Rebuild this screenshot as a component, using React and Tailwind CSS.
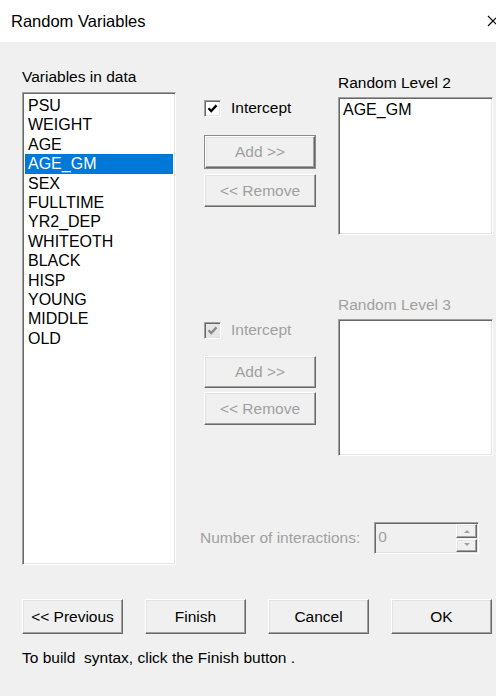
import React from 'react';

const variables = [
    'PSU', 'WEIGHT', 'AGE', 'AGE_GM', 'SEX', 'FULLTIME', 'YR2_DEP',
    'WHITEOTH', 'BLACK', 'HISP', 'YOUNG', 'MIDDLE', 'OLD',
];

const font = { fontFamily: '"Liberation Sans", Arial, sans-serif' };

// classic 3D frames
const sunken =
    'border border-t-[#a0a0a0] border-l-[#a0a0a0] border-b-white border-r-white shadow-[inset_1px_1px_0_#696969,inset_-1px_-1px_0_#e3e3e3]';
const raised =
    'border border-t-white border-l-white border-b-[#696969] border-r-[#696969] shadow-[inset_-1px_-1px_0_#a0a0a0,inset_1px_1px_0_#e3e3e3]';

function Button({ children, disabled, framed, className = '' }) {
    return (
        <div className={`${framed ? 'border border-[#8a8a8a]' : ''} ${className}`}>
            <div
                className={`h-full w-full flex items-center justify-center bg-[#f0f0f0] text-[15.5px] ${raised} ${disabled ? 'text-[#a0a0a0]' : 'text-black'}`}
            >
                {children}
            </div>
        </div>
    );
}

function Checkbox({ label, disabled }) {
    return (
        <div className="flex items-center h-[18px]">
            <div className={`w-[17px] h-[17px] flex items-center justify-center ${sunken} ${disabled ? 'bg-[#e6e6e6]' : 'bg-white'}`}>
                <svg width="11" height="11" viewBox="0 0 11 11">
                    <path d="M1.5 5.2 L4.2 8 L9.5 2.4" fill="none" stroke={disabled ? '#8a8a8a' : '#000'} strokeWidth="2.3" />
                </svg>
            </div>
            <span className={`ml-[10px] text-[15.5px] ${disabled ? 'text-[#a0a0a0]' : 'text-black'}`}>{label}</span>
        </div>
    );
}

function LevelGroup({ title, items, disabled, boxH, addClass, removeClass }) {
    return (
        <div className="flex gap-[22px]">
            {/* Intercept + Add/Remove */}
            <div className="w-[112px] flex flex-col pt-[25px]">
                <Checkbox label="Intercept" disabled={disabled} />
                <Button disabled framed={!disabled} className={addClass}>Add &gt;&gt;</Button>
                <Button disabled className={removeClass}>&lt;&lt; Remove</Button>
            </div>
            {/* Level box */}
            <div className="w-[155px] flex flex-col">
                <div className={`h-[18px] leading-[18px] text-[15.5px] ${disabled ? 'text-[#a0a0a0]' : 'text-black'}`}>{title}</div>
                <div className={`mt-[5px] bg-white ${sunken} pl-[4px] pt-[2px]`} style={{ height: boxH }}>
                    {items.map((it) => (
                        <div key={it} className="text-[16px] leading-[19.4px]">{it}</div>
                    ))}
                </div>
            </div>
        </div>
    );
}

export default function App() {
    return (
        <div className="w-[496px] h-[696px] bg-[#f0f0f0] flex flex-col overflow-hidden" style={font}>
            {/* Title bar */}
            <div className="h-[42px] bg-white flex items-center justify-between pl-[11px] shrink-0">
                <span className="text-[16.5px] text-black">Random Variables</span>
                <svg width="12" height="12" viewBox="0 0 12 12" className="mr-[-3px]">
                    <path d="M1 1 L11 11 M11 1 L1 11" stroke="#000" strokeWidth="1.2" />
                </svg>
            </div>

            <div className="flex pl-[22px]">
                {/* Variables list */}
                <div className="w-[154px] flex flex-col pt-[26px]">
                    <div className="h-[18px] leading-[18px] text-[15.5px]">Variables in data</div>
                    <div className={`mt-[6px] h-[473px] bg-white ${sunken} p-[2px] pt-[3px]`}>
                        {variables.map((v) => (
                            <div
                                key={v}
                                className={`pl-[3px] text-[16px] leading-[19.4px] ${v === 'AGE_GM' ? 'bg-[#0078d7] text-white' : 'text-black'}`}
                            >
                                {v}
                            </div>
                        ))}
                    </div>
                </div>

                <div className="ml-[28px] flex flex-col pt-[32px]">
                    <LevelGroup
                        title="Random Level 2"
                        items={['AGE_GM']}
                        boxH={138}
                        addClass="h-[34px] mt-[18px]"
                        removeClass="h-[33px] mt-[5px]"
                    />
                    <div className="mt-[61px]">
                        <LevelGroup
                            title="Random Level 3"
                            items={[]}
                            disabled
                            boxH={137}
                            addClass="h-[32px] mt-[17px]"
                            removeClass="h-[33px] mt-[4px]"
                        />
                    </div>

                    {/* Interactions spinner */}
                    <div className="mt-[66px] ml-[-4px] flex items-center h-[32px]">
                        <span className="text-[15.5px] text-[#a0a0a0]">Number of interactions:</span>
                        <div className={`ml-[14px] w-[105px] h-[32px] flex ${sunken} bg-[#f0f0f0]`}>
                            <span className="flex-1 pl-[3px] pt-[2px] text-[15.5px] text-[#a0a0a0]">0</span>
                            <div className="w-[23px] flex flex-col p-[1px] gap-[1px]">
                                <div className={`flex-1 flex items-center justify-center ${raised}`}>
                                    <svg width="6" height="4" viewBox="0 0 6 4"><path d="M0 4 L3 1 L6 4 Z" fill="#a0a0a0" /></svg>
                                </div>
                                <div className={`flex-1 flex items-center justify-center ${raised}`}>
                                    <svg width="6" height="4" viewBox="0 0 6 4"><path d="M0 0 L3 3 L6 0 Z" fill="#a0a0a0" /></svg>
                                </div>
                            </div>
                        </div>
                    </div>
                </div>
            </div>

            {/* Wizard buttons */}
            <div className="flex pl-[22px] mt-[34px] gap-[22px]">
                <Button className="w-[101px] h-[35px]">&lt;&lt; Previous</Button>
                <Button className="w-[101px] h-[35px]">Finish</Button>
                <Button className="w-[101px] h-[35px]">Cancel</Button>
                <Button className="w-[101px] h-[35px]">OK</Button>
            </div>

            <div className="pl-[22px] mt-[15px] text-[15.5px] leading-[18px] text-black whitespace-pre">
                To build  syntax, click the Finish button .
            </div>
        </div>
    );
}
